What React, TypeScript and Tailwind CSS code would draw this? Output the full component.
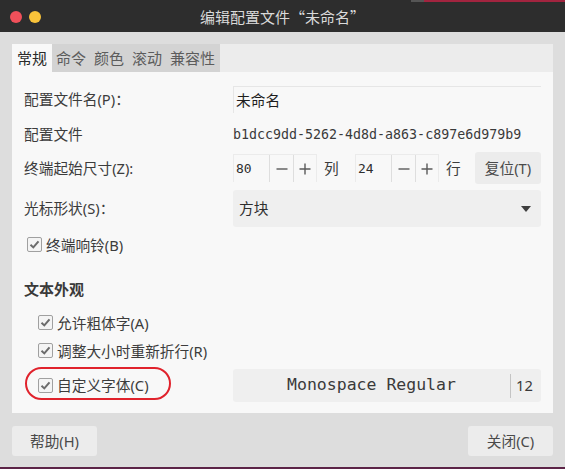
import React from "react";

const ui = "font-['Noto_Sans','Noto_Sans_CJK_SC',sans-serif]";
const cjk = "font-['Noto_Sans_CJK_SC',sans-serif]";
const mono = "font-['DejaVu_Sans_Mono','Liberation_Mono',monospace]";

function Check() {
  return (
    <span className="w-[15px] h-[15px] shrink-0 rounded-[2px] border border-[#a0a0a0] bg-[#f4f4f4] flex items-center justify-center">
      <svg width="11" height="11" viewBox="0 0 11 11">
        <path d="M1.5 5.8 L4.3 8.4 L9.5 2.3" fill="none" stroke="#6b6b6b" strokeWidth="2" />
      </svg>
    </span>
  );
}

function CheckRow({ label, indent }: { label: string; indent?: boolean }) {
  return (
    <div className={`flex items-center gap-[4px] ${indent ? "pl-[14px]" : "pl-[3px]"}`}>
      <Check />
      <span className="text-[14.7px] text-[#3c3c3c]">{label}</span>
    </div>
  );
}

function Minus() {
  return (
    <svg width="12" height="12" viewBox="0 0 12 12">
      <path d="M0.5 6 H11.5" stroke="#5a5a5a" strokeWidth="1.4" />
    </svg>
  );
}

function Plus() {
  return (
    <svg width="12" height="12" viewBox="0 0 12 12">
      <path d="M0.5 6 H11.5 M6 0.5 V11.5" stroke="#5a5a5a" strokeWidth="1.4" />
    </svg>
  );
}

function Spin({ value }: { value: string }) {
  return (
    <div className="flex h-[28px] border-t border-l border-r border-[#ebebeb]">
      <span className={`w-[35px] pl-[2px] flex items-center text-[13px] text-[#2e2e2e] ${mono}`}>{value}</span>
      <span className="w-[24px] flex items-center justify-center border-l border-[#dedede]">
        <Minus />
      </span>
      <span className="w-[23px] flex items-center justify-center border-l border-[#dedede]">
        <Plus />
      </span>
    </div>
  );
}

export default function App() {
  return (
    <div className={`w-[565px] h-[469px] bg-[#dddddd] flex flex-col overflow-hidden ${ui}`}>
      {/* top edge */}
      <div className="h-[2px] flex bg-[#2d2d2d]">
        <div className="flex-1" />
        <div className="w-[13px] bg-[#555555]" />
        <div className="w-[141px] bg-[#a2243f]" />
      </div>

      {/* title bar */}
      <div className="h-[30px] bg-[#2d2d2d] grid grid-cols-[1fr_auto_1fr] items-center">
        <div className="flex items-center gap-[7px] pl-[10px]">
          <span className="w-[12px] h-[12px] rounded-full bg-[#f0505a]" />
          <span className="w-[12px] h-[12px] rounded-full bg-[#f9c33a]" />
        </div>
        <div className={`text-[15px] text-[#dadada] ${cjk}`}>编辑配置文件“未命名”</div>
        <div />
      </div>

      {/* body */}
      <div className="flex-1 flex flex-col px-[12px] pt-[12px]">
        <div className="h-[28px] bg-[#ececec] flex text-[15px]">
          <span className="px-[5px] flex items-center bg-[#f8f8f8] text-[#2a2a2a]">常规</span>
          <div className="flex bg-[#d3d3d3] text-[#5c5c5c] pr-[1px]">
            <span className="px-[4px] flex items-center">命令</span>
            <span className="px-[4px] flex items-center">颜色</span>
            <span className="px-[4px] flex items-center">滚动</span>
            <span className="px-[4px] flex items-center">兼容性</span>
          </div>
        </div>

        <div className="h-[341px] bg-[#f8f8f8] px-[12px] pt-[14px] flex flex-col text-[14.7px] text-[#3c3c3c]">
          <div className="h-[27px] grid grid-cols-[209px_1fr] items-center">
            <span>配置文件名(P)：</span>
            <div className="h-full border-t border-l border-[#e6e6e6] flex items-center pl-[2px] text-[#1e1e1e]">未命名</div>
          </div>

          <div className="mt-[8px] h-[27px] grid grid-cols-[209px_1fr] items-center">
            <span>配置文件</span>
            <span className={`text-[13.3px] text-[#3a3a3a] ${mono}`}>b1dcc9dd-5262-4d8d-a863-c897e6d979b9</span>
          </div>

          <div className="mt-[4px] h-[32px] grid grid-cols-[209px_1fr] items-center">
            <span>终端起始尺寸(Z):</span>
            <div className="flex items-center">
              <Spin value="80" />
              <span className="ml-[7px] w-[31px]">列</span>
              <Spin value="24" />
              <span className="ml-[7px]">行</span>
              <span className="ml-auto w-[66px] h-[32px] rounded-[3px] bg-[#ececec] flex items-center justify-center text-[#4a4a4a]">
                复位(T)
              </span>
            </div>
          </div>

          <div className="mt-[6px] h-[37px] grid grid-cols-[209px_1fr] items-center">
            <span>光标形状(S)：</span>
            <div className="h-full rounded-[3px] bg-[#efefef] flex items-center pl-[6px] pr-[10px]">
              <span className="flex-1 text-[#2e2e2e]">方块</span>
              <svg width="10" height="6" viewBox="0 0 10 6">
                <path d="M0 0 H10 L5 6 Z" fill="#3f3f3f" />
              </svg>
            </div>
          </div>

          <div className="mt-[6px] h-[24px] flex items-center">
            <CheckRow label="终端响铃(B)" />
          </div>

          <div className="mt-[20px] h-[24px] flex items-center text-[15px] font-bold text-[#3a3a3a]">文本外观</div>

          <div className="mt-[10px] h-[24px] flex items-center">
            <CheckRow label="允许粗体字(A)" indent />
          </div>

          <div className="mt-[4px] h-[24px] flex items-center">
            <CheckRow label="调整大小时重新折行(R)" indent />
          </div>

          <div className="mt-[6px] h-[33px] grid grid-cols-[209px_1fr] items-center">
            <div className="relative h-full flex items-center">
              <CheckRow label="自定义字体(C)" indent />
              <span className="absolute left-[1px] top-[-2px] w-[146px] h-[33px] rounded-full border-2 border-[#e0222c]" />
            </div>
            <div className="h-full rounded-[3px] bg-[#efefef] flex items-center">
              <span className={`flex-1 text-center text-[16.5px] text-[#3a3a3a] ${mono}`}>Monospace Regular</span>
              <span className="w-px h-[24px] bg-[#c4c4c4]" />
              <span className="w-[30px] pl-[5px] text-[14.7px] text-[#3a3a3a]">12</span>
            </div>
          </div>
        </div>

        <div className="mt-[13px] flex justify-between">
          <span className="w-[85px] h-[30px] rounded-[3px] bg-[#ececec] flex items-center justify-center text-[14.7px] text-[#4a4a4a]">
            帮助(H)
          </span>
          <span className="w-[85px] h-[30px] rounded-[3px] bg-[#ececec] flex items-center justify-center text-[14.7px] text-[#4a4a4a]">
            关闭(C)
          </span>
        </div>
        <div className="flex-1" />
      </div>
      <div className="h-[2px] bg-[#5c2447]" />
    </div>
  );
}
